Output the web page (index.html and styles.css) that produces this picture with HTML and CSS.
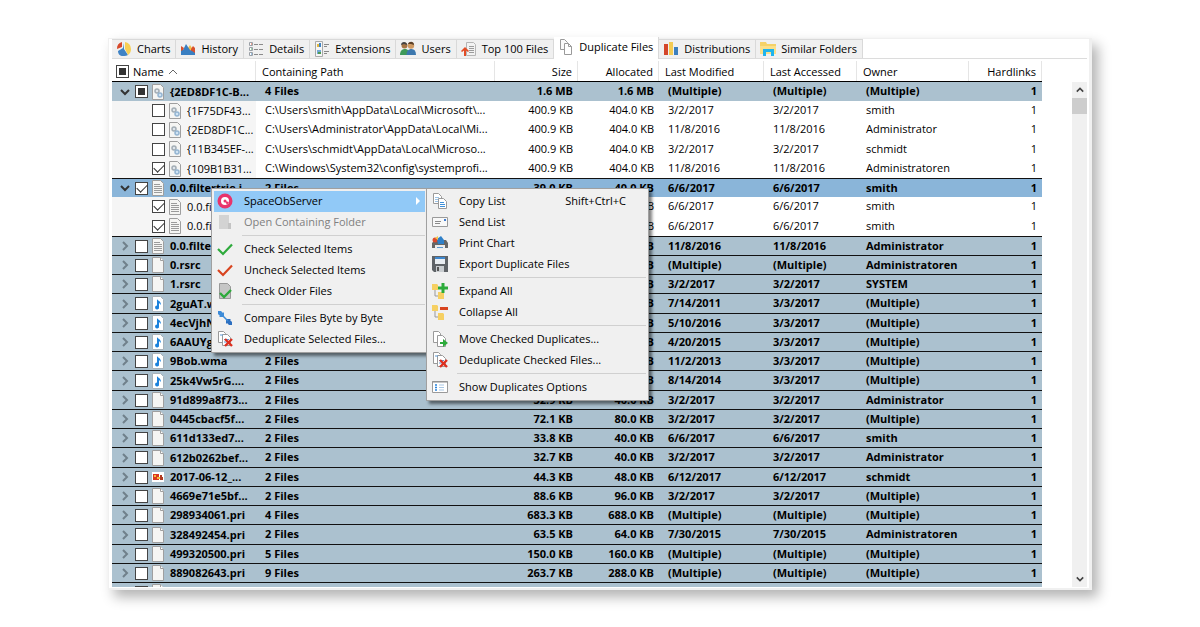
FILE: index.html
```html
<!DOCTYPE html>
<html lang="en">
<head>
    <meta charset="UTF-8">
    <meta name="viewport" content="width=device-width, initial-scale=1.0">
    <title>SpaceObServer - Duplicate Files</title>
    <link rel="stylesheet" href="styles.css">
</head>
<body>
    <!-- Icon set -->
    <svg class="sprite" aria-hidden="true">
        <symbol id="i-charts" viewBox="0 0 16 16">
            <path d="M8 2v6l4 6a7 7 0 0 1-5 1c-3 0-5-2-5-5l5-3z" fill="#3f83c5"/>
            <path d="M9 1a7 7 0 0 1 6 7c0 3-1 4-3 6L9 8z" fill="#f7cf55"/>
            <path d="M6 1v5L1 8a7 7 0 0 1 5-7z" fill="#d8492b"/>
        </symbol>
        <symbol id="i-history" viewBox="0 0 16 16">
            <path d="M8 7l2-3 2 3 1 1v6H8z" fill="#f3c04d"/>
            <path d="M11 8l2-3 2 2v7h-4z" fill="#d9502d"/>
            <path d="M1 8l2 1 3-6 4 6 2 1 3 2v2H1z" fill="#3a7fc2"/>
            <path d="M1 5l3 2-1 2-2 1z" fill="#d9502d"/>
        </symbol>
        <symbol id="i-details" viewBox="0 0 16 16">
            <path d="M1.500 1.500h3v3h-3zM1.500 6.500h3v3h-3zM1.500 11.500h3v3h-3z" fill="#fff" stroke="#9aa0a6"/>
            <path d="M3 3h1" stroke="#d8492b"/><path d="M3 8h1" stroke="#3aa655"/><path d="M3 13h1" stroke="#3f83c5"/>
            <path d="M6 3.500h4M11 3.500h4M6 8.500h4M11 8.500h4M6 13.500h4M11 13.500h4" stroke="#8b8b8b"/>
        </symbol>
        <symbol id="i-ext" viewBox="0 0 16 16">
            <path d="M1.500 .5h7v15h-7z" fill="#f6f6f6" stroke="#aaa"/>
            <path d="M3 3h2v3H3z" fill="#e3b73c"/><path d="M5 2h2v4H5z" fill="#3f83c5"/>
            <path d="M3 9h4v4H3z" fill="#74a9d4"/><path d="M4 11h3v2H4z" fill="#4d9a51"/>
            <path d="M10 3.500h5M10 5.500h3M10 10.500h5M10 12.500h3" stroke="#888"/>
        </symbol>
        <symbol id="i-users" viewBox="0 0 16 16">
            <circle cx="4.500" cy="4.500" r="3" fill="#a77545"/><path d="M0 14c0-4 2-6 5-6s4 2 4 6z" fill="#3f9a5a"/>
            <circle cx="11" cy="4.500" r="3.200" fill="#cf9a63"/><path d="M8 3c1-3 6-3 6 1l-3-1z" fill="#5c4028"/>
            <path d="M6.500 14c0-4 2-6 5-6s4.500 2 4.500 6z" fill="#3d78ae"/>
            <path d="M1 4c0-4 6-4 6 0L4 3z" fill="#444"/>
        </symbol>
        <symbol id="i-top" viewBox="0 0 16 16">
            <path d="M5.500 1.500h7l2 2v11h-9z" fill="#f2f2f2" stroke="#b5b5b5"/>
            <path d="M8 5.500h5M8 7.500h5M8 9.500h5M8 11.500h5" stroke="#9b9b9b"/>
            <path d="M0 10l4-4 4 4-1 1-2-1.500V15H3V9.500L1 11z" fill="#e24c25"/>
        </symbol>
        <symbol id="i-dup" viewBox="0 0 16 16">
            <path d="M2.500.5h4l3 3v7h-7z" fill="#fafafa" stroke="#9a9a9a"/>
            <path d="M6.500 4.500h4l3 3v8h-7z" fill="#fff" stroke="#9a9a9a"/>
            <path d="M10.500 4.500v3h3" fill="none" stroke="#9a9a9a"/>
        </symbol>
        <symbol id="i-dist" viewBox="0 0 16 16">
            <path d="M1 3h4v11H1z" fill="#d4462a"/><path d="M6 1h4v13H6z" fill="#f3cb54"/><path d="M11 6h4v8h-4z" fill="#3c7fbe"/>
        </symbol>
        <symbol id="i-similar" viewBox="0 0 16 16">
            <path d="M0 1h6l1 2h9v9H0z" fill="#f5d267"/><path d="M0 5h16v8H0z" fill="#fbe08a"/>
            <path d="M3 15V8h11v7h-3v-4H6v4z" fill="#20b4ec"/>
        </symbol>
        <symbol id="i-blank" viewBox="0 0 12 16">
            <path d="M.5.5h8l3 3v12H.5z" fill="#f5f5f3" stroke="#9f9f9f"/><path d="M8.500.5v3h3" fill="#fff" stroke="#9f9f9f"/>
        </symbol>
        <symbol id="i-text" viewBox="0 0 12 16">
            <path d="M.5.5h8l3 3v12H.5z" fill="#f5f5f3" stroke="#9f9f9f"/>
            <path d="M2 4.500h6M2 6.500h8M2 8.500h8M2 10.500h8M2 12.500h8" stroke="#9b9b9b"/>
        </symbol>
        <symbol id="i-gear" viewBox="0 0 12 16">
            <path d="M.5.5h8l3 3v12H.5z" fill="#f5f5f3" stroke="#9f9f9f"/>
            <circle cx="5" cy="7" r="2" fill="#dfe6ec" stroke="#a3adb5" stroke-width="1.500"/>
            <circle cx="8" cy="11" r="2" fill="#cfe2f2" stroke="#94b5d2" stroke-width="1.500"/>
        </symbol>
        <symbol id="i-music" viewBox="0 0 12 16">
            <path d="M.5.5h8l3 3v12H.5z" fill="#fff" stroke="#a9b3ba"/>
            <path d="M5 3c1 2 4 2 4 6l-2-2v4a2 2 0 1 1-2-1.500z" fill="#1c82dc"/>
        </symbol>
        <symbol id="i-image" viewBox="0 0 12 16">
            <path d="M0 3h12v10H0z" fill="#fff"/>
            <path d="M1 5h6v6H1z" fill="#d9381e"/><path d="M2 6h2v2H2zM5 8h3v2H5z" fill="#f5b93a"/><path d="M8 6h2v2h1v3H8z" fill="#b03a22"/>
        </symbol>
        <symbol id="i-space" viewBox="0 0 16 16">
            <circle cx="8" cy="8" r="7.500" fill="#e8336b"/><circle cx="8" cy="8" r="4" fill="#fff"/>
            <circle cx="8" cy="8" r="1.500" fill="#e8336b"/><path d="M8 8l4 1-2 3z" fill="#e8336b"/>
        </symbol>
        <symbol id="i-folder-off" viewBox="0 0 16 16">
            <path d="M2 1h10v14H2z" fill="#d3d3d3"/><path d="M11 9h3v6h-3z" fill="#c4c4c4"/>
        </symbol>
        <symbol id="i-check" viewBox="0 0 16 16"><path d="M1 8l5 5 9-9.500" fill="none" stroke="#2eaa3c" stroke-width="2.200"/></symbol>
        <symbol id="i-uncheck" viewBox="0 0 16 16"><path d="M1 8l5 5 9-9.500" fill="none" stroke="#d8441f" stroke-width="2.200"/></symbol>
        <symbol id="i-older" viewBox="0 0 16 16">
            <path d="M2.500.5h8l3 3v12h-11z" fill="#c6c6c6" stroke="#999"/><path d="M3 10l4 4 7-7" fill="none" stroke="#2eaa3c" stroke-width="2.400"/>
        </symbol>
        <symbol id="i-compare" viewBox="0 0 16 16">
            <path d="M1 1h3l2 2 1-1v5H2l1-1-2-2z" fill="#3d8bd8"/>
            <path d="M15 15h-3l-2-2-1 1V9h5l-1 1 2 2z" fill="#2c6fc0"/>
            <path d="M5 5l6 6" stroke="#3d8bd8" stroke-width="1.500"/>
        </symbol>
        <symbol id="i-dedup" viewBox="0 0 16 16">
            <path d="M1.500.5h5l2 2v9h-7z" fill="#fff" stroke="#9a9a9a"/>
            <path d="M5.500 3.500h5l3 3v8h-8z" fill="#fff" stroke="#9a9a9a"/><path d="M7 8.500h5M7 11h4M3 4h3" stroke="#5c9bd6"/>
            <path d="M8 8l7 7M15 8l-7 7" stroke="#dd2f1f" stroke-width="2.400"/>
        </symbol>
        <symbol id="i-copy" viewBox="0 0 16 16">
            <path d="M1.500.5h5l3 3v7h-8z" fill="#fff" stroke="#9a9a9a"/><path d="M3 4.500h4M3 6.500h4M3 8.500h4" stroke="#9cc3e6"/>
            <path d="M6.500 5.500h5l3 3v7h-8z" fill="#fff" stroke="#9a9a9a"/><path d="M8 9.500h4M8 11.500h5M8 13.500h5" stroke="#3f8fd8"/>
        </symbol>
        <symbol id="i-mail" viewBox="0 0 16 16">
            <path d="M.5 3.500h15v9H.5z" fill="#f8f8f8" stroke="#9a9a9a"/><path d="M3 7.500h6M3 9.500h5" stroke="#8a8a8a"/><path d="M12 5h2v2h-2z" fill="#3d7bd0"/>
        </symbol>
        <symbol id="i-print" viewBox="0 0 16 16">
            <path d="M1 7l2-2h11l2 3v5H0V8z" fill="#666"/><path d="M3 10h10v4H3z" fill="#ececec"/>
            <circle cx="3" cy="5" r="2.500" fill="#dc4a2b"/><path d="M5 4l4-3 3 4v4H6z" fill="#2f80c8"/><path d="M3 3l3-2v4z" fill="#f4c64b"/><path d="M5 12.500h6" stroke="#5a98d0"/>
        </symbol>
        <symbol id="i-save" viewBox="0 0 16 16">
            <path d="M0 0h16v16H2l-2-2z" fill="#5f6367"/><path d="M3 1h10v7H3z" fill="#e9edf1"/><path d="M3 1h10v2H3z" fill="#3e87ce"/><path d="M4 10h8v6H4z" fill="#c9cdd0"/><path d="M5 11h2v4H5z" fill="#555"/>
        </symbol>
        <symbol id="i-expand" viewBox="0 0 16 16">
            <path d="M3 7v6h4" fill="none" stroke="#999"/>
            <path d="M0 1h5l1 1v5H0zM6 9h5l1 1v6H6z" fill="#f6d062"/><path d="M11 0v10M6 5h10" stroke="#2cab3a" stroke-width="3"/>
        </symbol>
        <symbol id="i-collapse" viewBox="0 0 16 16">
            <path d="M3 7v6h4" fill="none" stroke="#999"/>
            <path d="M0 1h5l1 1v5H0zM6 9h5l1 1v6H6z" fill="#f6d062"/><path d="M8 4.500h8" stroke="#d8441f" stroke-width="3"/>
        </symbol>
        <symbol id="i-move" viewBox="0 0 16 16">
            <path d="M1.500.5h5l2 2v9h-7z" fill="#fff" stroke="#9a9a9a"/><path d="M5.500 4.500h5l3 3v8h-8z" fill="#fff" stroke="#9a9a9a"/>
            <path d="M8 11h3V8l5 4-5 4v-3H8z" fill="#2cab3a"/>
        </symbol>
        <symbol id="i-options" viewBox="0 0 16 16">
            <path d="M.5 2.500h15v11H.5z" fill="#fff" stroke="#9a9a9a"/><path d="M0 3h16" stroke="#8d8d8d"/>
            <path d="M3 6h2M3 8.500h2M3 11h2" stroke="#2a84dc" stroke-width="1.500"/><path d="M7 6h5M7 8.500h5M7 11h5" stroke="#a9c7e4"/>
        </symbol>
        <symbol id="i-down" viewBox="0 0 10 10"><path d="M1 3l4 4 4-4" fill="none" stroke="currentColor" stroke-width="2"/></symbol>
        <symbol id="i-up" viewBox="0 0 10 10"><path d="M1 7l4-4 4 4" fill="none" stroke="currentColor" stroke-width="2"/></symbol>
        <symbol id="i-right" viewBox="0 0 10 10"><path d="M3 1l4 4-4 4" fill="none" stroke="currentColor" stroke-width="2"/></symbol>
        <symbol id="i-sort" viewBox="0 0 10 10"><path d="M1 7l4-4 4 4" fill="none" stroke="currentColor"/></symbol>
        <symbol id="i-play" viewBox="0 0 10 10"><path d="M3 1l4 4-4 4z" fill="currentColor"/></symbol>
    </svg>

    <main class="window">
        <div class="tabs" role="tablist">
            <button class="tab" role="tab"><svg class="icon"><use href="#i-charts"/></svg>Charts</button>
            <button class="tab" role="tab"><svg class="icon"><use href="#i-history"/></svg>History</button>
            <button class="tab" role="tab"><svg class="icon"><use href="#i-details"/></svg>Details</button>
            <button class="tab" role="tab"><svg class="icon"><use href="#i-ext"/></svg>Extensions</button>
            <button class="tab" role="tab"><svg class="icon"><use href="#i-users"/></svg>Users</button>
            <button class="tab" role="tab"><svg class="icon"><use href="#i-top"/></svg>Top 100 Files</button>
            <button class="tab active" role="tab" aria-selected="true"><svg class="icon"><use href="#i-dup"/></svg>Duplicate Files</button>
            <button class="tab" role="tab"><svg class="icon"><use href="#i-dist"/></svg>Distributions</button>
            <button class="tab" role="tab"><svg class="icon"><use href="#i-similar"/></svg>Similar Folders</button>
        </div>

        <div class="panel">
            <div class="list">
                <table class="files">
                    <colgroup>
                        <col class="col-name"><col><col class="col-size"><col class="col-alloc"><col class="col-modified"><col class="col-accessed"><col class="col-owner"><col class="col-links">
                    </colgroup>
                    <thead>
                        <tr>
                            <th class="name"><div class="name-cell"><input type="checkbox" class="box mixed" aria-label="Select all">Name<svg class="arrow sort"><use href="#i-sort"/></svg></div></th>
                            <th>Containing Path</th>
                            <th class="num">Size</th>
                            <th class="num">Allocated</th>
                            <th>Last Modified</th>
                            <th>Last Accessed</th>
                            <th>Owner</th>
                            <th class="num">Hardlinks</th>
                        </tr>
                    </thead>
                    <tbody id="filesBody"></tbody>
                </table>
            </div>
            <div class="scrollbar">
                <button class="scroll-button" aria-label="Scroll up"><svg class="arrow"><use href="#i-up"/></svg></button>
                <div class="thumb"></div>
                <button class="scroll-button last" aria-label="Scroll down"><svg class="arrow"><use href="#i-down"/></svg></button>
            </div>
        </div>

        <div class="menu context-menu" role="menu">
            <button class="item highlighted" role="menuitem"><svg class="icon"><use href="#i-space"/></svg>SpaceObServer<svg class="arrow more"><use href="#i-play"/></svg></button>
            <button class="item" role="menuitem" disabled><svg class="icon"><use href="#i-folder-off"/></svg>Open Containing Folder</button>
            <hr>
            <button class="item" role="menuitem"><svg class="icon"><use href="#i-check"/></svg>Check Selected Items</button>
            <button class="item" role="menuitem"><svg class="icon"><use href="#i-uncheck"/></svg>Uncheck Selected Items</button>
            <button class="item" role="menuitem"><svg class="icon"><use href="#i-older"/></svg>Check Older Files</button>
            <hr>
            <button class="item" role="menuitem"><svg class="icon"><use href="#i-compare"/></svg>Compare Files Byte by Byte</button>
            <button class="item" role="menuitem"><svg class="icon"><use href="#i-dedup"/></svg>Deduplicate Selected Files...</button>
        </div>

        <div class="menu sub-menu" role="menu">
            <button class="item" role="menuitem"><svg class="icon"><use href="#i-copy"/></svg>Copy List<span class="shortcut">Shift+Ctrl+C</span></button>
            <button class="item" role="menuitem"><svg class="icon"><use href="#i-mail"/></svg>Send List</button>
            <button class="item" role="menuitem"><svg class="icon"><use href="#i-print"/></svg>Print Chart</button>
            <button class="item" role="menuitem"><svg class="icon"><use href="#i-save"/></svg>Export Duplicate Files</button>
            <hr>
            <button class="item" role="menuitem"><svg class="icon"><use href="#i-expand"/></svg>Expand All</button>
            <button class="item" role="menuitem"><svg class="icon"><use href="#i-collapse"/></svg>Collapse All</button>
            <hr>
            <button class="item" role="menuitem"><svg class="icon"><use href="#i-move"/></svg>Move Checked Duplicates...</button>
            <button class="item" role="menuitem"><svg class="icon"><use href="#i-dedup"/></svg>Deduplicate Checked Files...</button>
            <hr>
            <button class="item" role="menuitem"><svg class="icon"><use href="#i-options"/></svg>Show Duplicates Options</button>
        </div>
    </main>
    <script src="script.js"></script>
</body>
</html>
```

FILE: styles.css
```css
* {
    box-sizing: border-box;
}
body {
    margin: 0;
    height: 100vh;
    padding: 38px 9% 37px;
    background-color: #fff;
    color: #000;
    font-family: "Open Sans", "Noto Sans", sans-serif;
    font-size: 11px;
    line-height: 16px;
}
button {
    border: 0;
    padding: 0;
    background: none;
    color: inherit;
    font: inherit;
    white-space: nowrap;
}
.sprite {
    display: none;
}
.icon {
    width: 16px;
    height: 16px;
    flex: none;
}
.arrow {
    width: 10px;
    height: 10px;
    flex: none;
}
.window {
    position: relative;
    display: flex;
    flex-direction: column;
    height: 100%;
    padding: 0 2px 1px 3px;
    background-color: #fff;
    border: 1px solid #f0f0f0;
    border-width: 1px 3px 2px 1px;
    box-shadow: 6px 7px 12px rgba(0, 0, 0, 0.3);
}

/* Tabs */
.tabs {
    display: flex;
    align-items: flex-end;
    height: 20px;
    flex: none;
    border-bottom: 1px solid #dcdcdc;
}
.tab {
    display: flex;
    align-items: center;
    gap: 5px;
    height: 19px;
    padding: 0 5px 0 4px;
    background-color: #f0f0f0;
    border: 1px solid #d9d9d9;
    border-width: 1px 1px 0 0;
}
.tab.active {
    height: 22px;
    padding: 0 5px 3px 4px;
    margin-bottom: -1px;
    background-color: #fff;
    border-top: 0;
}

/* File list */
.panel {
    display: flex;
    flex: 1;
    min-height: 0;
    gap: 30px;
}
.list {
    flex: 1;
    min-width: 0;
    overflow: hidden;
}
.files {
    width: 100%;
    table-layout: fixed;
    border-collapse: separate;
    border-spacing: 0;
}
.col-name { width: 144px; }
.col-size { width: 83px; }
.col-alloc { width: 81px; }
.col-modified { width: 105px; }
.col-accessed { width: 93px; }
.col-owner { width: 112px; }
.col-links { width: 73px; }
th, td {
    padding: 0 5px 0 9px;
    overflow: hidden;
    text-align: left;
    white-space: nowrap;
}
th {
    height: 23px;
    padding: 3px 6px 0 6px;
    border-bottom: 1px solid #000;
    background: linear-gradient(#e5e5e5, #e5e5e5) right bottom / 1px 20px no-repeat;
    font-weight: normal;
}
td {
    height: 19px;
    padding-bottom: 1px;
}
tr:nth-child(4n) td {
    height: 20px;
}
.num {
    text-align: right;
}
.group td {
    background-color: #abc1cf;
    border-top: 1px solid #111;
    font-weight: bold;
}
.group:first-child td {
    border-top: 0;
}
.group.selected td {
    background-color: #8ab5d9;
}
.name {
    padding: 0 0 0 8px;
}
th.name {
    padding: 3px 0 0 4px;
}
.child .name {
    padding-left: 40px;
    background-color: #f5f5f5;
}
.name-cell {
    display: flex;
    align-items: center;
    gap: 4px;
}
.name-cell .arrow {
    margin-right: 1px;
    color: #70808b;
}
.name-cell .arrow.open {
    color: #333;
}
.name-cell .sort {
    color: #666;
}
.name-cell .file-icon {
    width: 12px;
    height: 16px;
    flex: none;
    margin-right: 2px;
}
.box {
    appearance: none;
    display: grid;
    place-items: center;
    width: 13px;
    height: 13px;
    flex: none;
    margin: 0;
    background-color: #fff;
    border: 1px solid #444;
}
.box:checked::before {
    content: "";
    width: 9px;
    height: 5px;
    margin-bottom: 3px;
    border: solid #333;
    border-width: 0 0 1px 1px;
    transform: rotate(-45deg);
}
.box.mixed::before {
    content: "";
    width: 7px;
    height: 7px;
    background-color: #333;
}

/* Scrollbar */
.scrollbar {
    display: flex;
    flex-direction: column;
    width: 15px;
    flex: none;
    margin-top: 23px;
    background-color: #f0f0f0;
}
.scroll-button {
    display: grid;
    place-items: center;
    height: 16px;
    color: #444;
}
.scroll-button .arrow {
    width: 8px;
    height: 8px;
}
.scroll-button.last {
    margin-top: auto;
}
.thumb {
    height: 16px;
    background-color: #cdcdcd;
}

/* Menus */
.menu {
    position: absolute;
    top: 149px;
    padding: 2px;
    background-color: #f0f0f0;
    border: 1px solid #a0a0a0;
    box-shadow: 3px 3px 3px rgba(0, 0, 0, 0.5);
}
.context-menu {
    left: 102px;
    width: 217px;
}
.sub-menu {
    left: 317px;
    width: 223px;
}
.menu .item {
    display: flex;
    align-items: center;
    gap: 11px;
    width: 100%;
    height: 21px;
    padding: 0 2px 2px 3px;
    text-align: left;
}
.menu .highlighted {
    background-color: #91c9f7;
}
.menu .item:disabled {
    color: #808080;
}
.menu .more {
    margin-left: auto;
    color: #fff;
}
.menu .shortcut {
    margin-left: auto;
    padding-right: 18px;
}
.menu hr {
    height: 1px;
    margin: 2px 0 3px 28px;
    border: 0;
    background-color: #d0d0d0;
}
```

FILE: script.js
```js
// type, name, path, size, allocated, modified, accessed, owner, icon, state
const files = [
    ['open', '{2ED8DF1C-B...', '4 Files', '1.6 MB', '1.6 MB', '(Multiple)', '(Multiple)', '(Multiple)', 'gear', 'mixed'],
    ['child', '{1F75DF43...', 'C:\\Users\\smith\\AppData\\Local\\Microsoft\\...', '400.9 KB', '404.0 KB', '3/2/2017', '3/2/2017', 'smith', 'gear', ''],
    ['child', '{2ED8DF1C...', 'C:\\Users\\Administrator\\AppData\\Local\\Mi...', '400.9 KB', '404.0 KB', '11/8/2016', '11/8/2016', 'Administrator', 'gear', ''],
    ['child', '{11B345EF-...', 'C:\\Users\\schmidt\\AppData\\Local\\Microso...', '400.9 KB', '404.0 KB', '3/2/2017', '3/2/2017', 'schmidt', 'gear', ''],
    ['child', '{109B1B31...', 'C:\\Windows\\System32\\config\\systemprofi...', '400.9 KB', '404.0 KB', '11/8/2016', '11/8/2016', 'Administratoren', 'gear', 'checked'],
    ['selected', '0.0.filtertrie.i...', '2 Files', '39.0 KB', '40.0 KB', '6/6/2017', '6/6/2017', 'smith', 'text', 'checked'],
    ['child', '0.0.filtert...', 'C:\\Users\\smith\\AppData', '19.5 KB', '20.0 KB', '6/6/2017', '6/6/2017', 'smith', 'text', 'checked'],
    ['child', '0.0.filtert...', 'C:\\Users\\smith\\AppData', '19.5 KB', '20.0 KB', '6/6/2017', '6/6/2017', 'smith', 'text', 'checked'],
    ['closed', '0.0.filtertri...', '2 Files', '39.0 KB', '40.0 KB', '11/8/2016', '11/8/2016', 'Administrator', 'text', ''],
    ['closed', '0.rsrc', '2 Files', '39.0 KB', '40.0 KB', '(Multiple)', '(Multiple)', 'Administratoren', 'blank', ''],
    ['closed', '1.rsrc', '2 Files', '39.0 KB', '40.0 KB', '3/2/2017', '3/2/2017', 'SYSTEM', 'blank', ''],
    ['closed', '2guAT.wma', '2 Files', '39.0 KB', '40.0 KB', '7/14/2011', '3/3/2017', '(Multiple)', 'music', ''],
    ['closed', '4ecVjhN.wma', '2 Files', '39.0 KB', '40.0 KB', '5/10/2016', '3/3/2017', '(Multiple)', 'music', ''],
    ['closed', '6AAUYg.wma', '2 Files', '39.0 KB', '40.0 KB', '4/20/2015', '3/3/2017', '(Multiple)', 'music', ''],
    ['closed', '9Bob.wma', '2 Files', '39.0 KB', '40.0 KB', '11/2/2013', '3/3/2017', '(Multiple)', 'music', ''],
    ['closed', '25k4Vw5rG....', '2 Files', '39.0 KB', '40.0 KB', '8/14/2014', '3/3/2017', '(Multiple)', 'music', ''],
    ['closed', '91d899a8f73...', '2 Files', '32.9 KB', '40.0 KB', '3/2/2017', '3/2/2017', 'Administrator', 'blank', ''],
    ['closed', '0445cbacf5f...', '2 Files', '72.1 KB', '80.0 KB', '3/2/2017', '3/2/2017', '(Multiple)', 'blank', ''],
    ['closed', '611d133ed7...', '2 Files', '33.8 KB', '40.0 KB', '6/6/2017', '6/6/2017', 'smith', 'blank', ''],
    ['closed', '612b0262bef...', '2 Files', '32.7 KB', '40.0 KB', '3/2/2017', '3/2/2017', 'Administrator', 'blank', ''],
    ['closed', '2017-06-12_...', '2 Files', '44.3 KB', '48.0 KB', '6/12/2017', '6/12/2017', 'schmidt', 'image', ''],
    ['closed', '4669e71e5bf...', '2 Files', '88.6 KB', '96.0 KB', '3/2/2017', '3/2/2017', '(Multiple)', 'blank', ''],
    ['closed', '298934061.pri', '4 Files', '683.3 KB', '688.0 KB', '(Multiple)', '(Multiple)', '(Multiple)', 'blank', ''],
    ['closed', '328492454.pri', '2 Files', '63.5 KB', '64.0 KB', '7/30/2015', '7/30/2015', 'Administratoren', 'blank', ''],
    ['closed', '499320500.pri', '5 Files', '150.0 KB', '160.0 KB', '(Multiple)', '(Multiple)', '(Multiple)', 'blank', ''],
    ['closed', '889082643.pri', '9 Files', '263.7 KB', '288.0 KB', '(Multiple)', '(Multiple)', '(Multiple)', 'blank', ''],
    ['closed', '', '', '', '', '', '', '', 'blank', '']
];

const filesBody = document.getElementById('filesBody');

files.forEach(([type, name, path, size, allocated, modified, accessed, owner, icon, state]) => {
    const row = document.createElement('tr');
    const open = type === 'open' || type === 'selected';
    row.className = type === 'child' ? 'child' : 'group ' + type;
    const arrow = type === 'child' ? '' :
        `<svg class="arrow ${open ? 'open' : ''}"><use href="#i-${open ? 'down' : 'right'}"/></svg>`;
    row.innerHTML = `
        <td class="name"><div class="name-cell">${arrow}<input type="checkbox" class="box ${state}" aria-label="${name}" ${state === 'checked' ? 'checked' : ''}><svg class="file-icon"><use href="#i-${icon}"/></svg>${name}</div></td>
        <td>${path}</td>
        <td class="num">${size}</td>
        <td class="num">${allocated}</td>
        <td>${modified}</td>
        <td>${accessed}</td>
        <td>${owner}</td>
        <td class="num">${name ? 1 : ''}</td>
    `;
    filesBody.appendChild(row);
});
```
